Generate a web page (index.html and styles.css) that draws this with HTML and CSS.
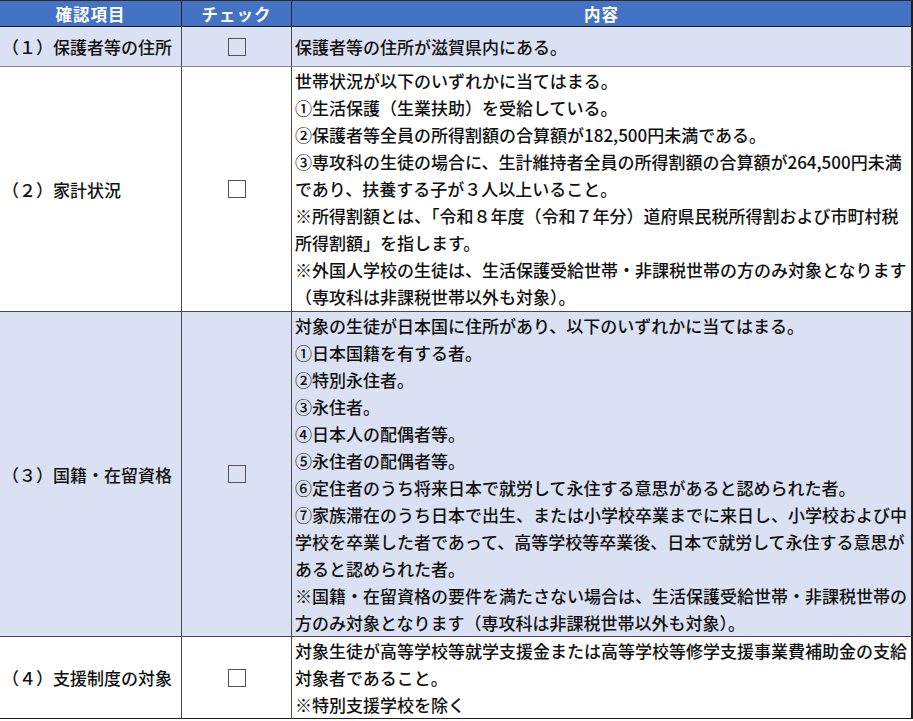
FILE: index.html
```html
<!DOCTYPE html>
<html lang="ja">
<head>
<meta charset="utf-8">
<title>確認項目</title>
<link rel="stylesheet" href="styles.css">
</head>
<body>
<div class="sheet">
  <div class="hd c1">確認項目</div>
  <div class="hd c2">チェック</div>
  <div class="hd c3">内容</div>

  <div class="cell c1 tint r1">（１）保護者等の住所</div>
  <div class="cell c2 tint r1"><span class="box"></span></div>
  <div class="cell c3 tint r1 txt">保護者等の住所が滋賀県内にある。</div>

  <div class="cell c1 r2">（２）家計状況</div>
  <div class="cell c2 r2"><span class="box"></span></div>
  <div class="cell c3 r2 txt">世帯状況が以下のいずれかに当てはまる。<br>①生活保護（生業扶助）を受給している。<br>②保護者等全員の所得割額の合算額が182,500円未満である。<br>③専攻科の生徒の場合に、生計維持者全員の所得割額の合算額が264,500円未満<br>であり、扶養する子が３人以上いること。<br>※所得割額とは、「令和８年度（令和７年分）道府県民税所得割および市町村税<br>所得割額」を指します。<br>※外国人学校の生徒は、生活保護受給世帯・非課税世帯の方のみ対象となります<br>（専攻科は非課税世帯以外も対象）。</div>

  <div class="cell c1 tint">（３）国籍・在留資格</div>
  <div class="cell c2 tint"><span class="box"></span></div>
  <div class="cell c3 tint txt">対象の生徒が日本国に住所があり、以下のいずれかに当てはまる。<br>①日本国籍を有する者。<br>②特別永住者。<br>③永住者。<br>④日本人の配偶者等。<br>⑤永住者の配偶者等。<br>⑥定住者のうち将来日本で就労して永住する意思があると認められた者。<br>⑦家族滞在のうち日本で出生、または小学校卒業までに来日し、小学校および中<br>学校を卒業した者であって、高等学校等卒業後、日本で就労して永住する意思が<br>あると認められた者。<br>※国籍・在留資格の要件を満たさない場合は、生活保護受給世帯・非課税世帯の<br>方のみ対象となります（専攻科は非課税世帯以外も対象）。</div>

  <div class="cell c1 last">（４）支援制度の対象</div>
  <div class="cell c2 last"><span class="box"></span></div>
  <div class="cell c3 last txt">対象生徒が高等学校等就学支援金または高等学校等修学支援事業費補助金の支給<br>対象者であること。<br>※特別支援学校を除く</div>
</div>
</body>
</html>
```
FILE: styles.css
```css
html, body {
  margin: 0;
  padding: 0;
  background: #ffffff;
}

body {
  font-family: "Noto Sans CJK JP", "Noto Sans", sans-serif;
  font-size: 17px;
  font-weight: 500;
  color: #111111;
}

.sheet {
  display: grid;
  grid-template-columns: 182px 110px 621px;
  width: 913px;
}

.hd {
  height: 27px;
  box-sizing: border-box;
  background: #4472c4;
  color: #ffffff;
  font-weight: 700;
  font-size: 16.5px;
  display: flex;
  align-items: center;
  justify-content: center;
  border-top: 1px solid #2a2a2a;
  border-bottom: 1px solid #1e1e1e;
  border-right: 1px solid #2a2a2a;
  letter-spacing: 1px;
}

.hd.c3 {
  border-right: 2px solid #1e1e1e;
}

.cell {
  box-sizing: border-box;
  border-right: 1px solid #4a4a4a;
  border-bottom: 1px solid #4a4a4a;
  line-height: 27px;
  display: flex;
  align-items: center;
}

.cell.c1 {
  padding-left: 2px;
  white-space: nowrap;
}

.cell.c2 {
  justify-content: center;
}

.cell.c3 {
  border-right: 2px solid #1e1e1e;
  padding-left: 3px;
  white-space: nowrap;
}

.cell.txt {
  display: block;
}

.tint {
  background: #d9e1f2;
}

.r1 {
  height: 40px;
  border-bottom-color: #8a8a8a;
}

.r1.txt {
  padding-top: 6px;
}

.r2.txt {
  padding-bottom: 1px;
}

.last {
  border-bottom: 1px solid #1e1e1e;
}

.box {
  display: block;
  width: 18px;
  height: 18px;
  box-sizing: border-box;
  border: 1.5px solid #555055;
  background: transparent;
}
```
